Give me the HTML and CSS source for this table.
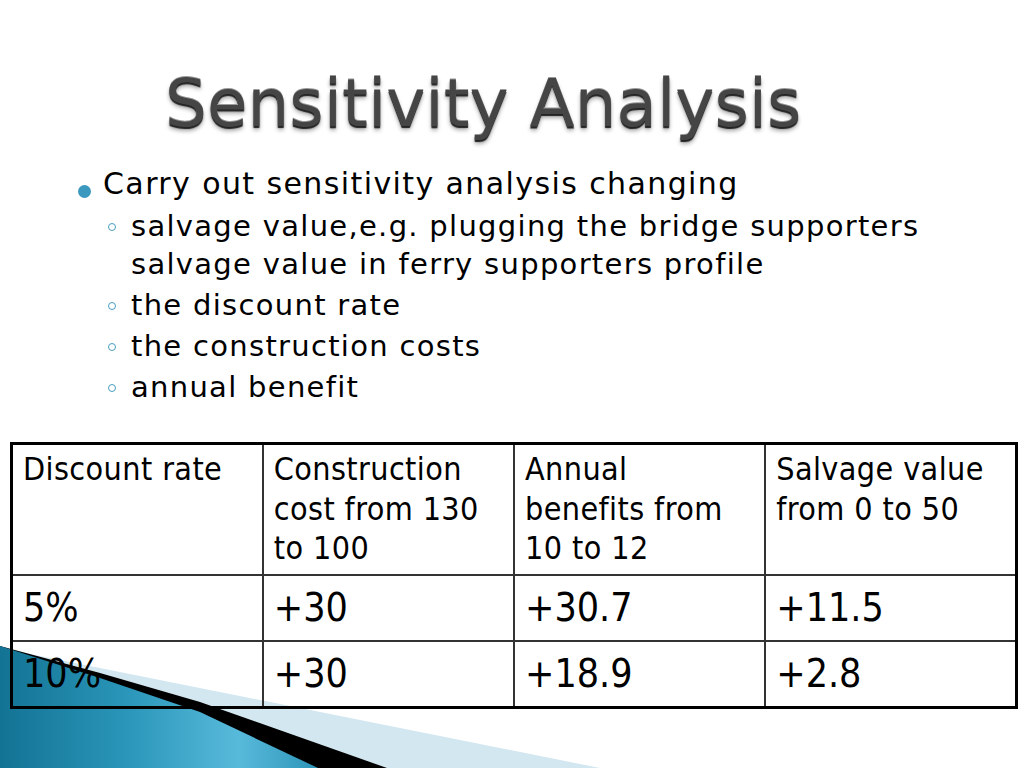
FILE: index.html
```html
<!DOCTYPE html>
<html>
<head>
<meta charset="utf-8">
<link rel="stylesheet" href="styles.css">
</head>
<body>
<div class="slide">
  <svg class="deco" width="620" height="140" viewBox="0 640 620 140" aria-hidden="true">
    <defs>
      <linearGradient id="blueGrad" x1="0" y1="0" x2="1" y2="0">
        <stop offset="0" stop-color="#137394"/>
        <stop offset="0.4" stop-color="#2a96b9"/>
        <stop offset="0.75" stop-color="#58badb"/>
        <stop offset="1" stop-color="#2d95b8"/>
      </linearGradient>
    </defs>
    <polygon points="0,648 600,768 0,768" fill="#d3e7f0"/>
    <polygon points="0,646 100,673 200,702 387,768 0,768" fill="#000"/>
    <polygon points="0,646 100,678 200,712 318,768 0,768" fill="url(#blueGrad)"/>
  </svg>

  <h1 class="title">Sensitivity Analysis</h1>

  <ul class="bullets">
    <li class="lvl1"><span class="dot"></span><span>Carry out sensitivity analysis changing</span></li>
    <li class="lvl2"><span class="ring"></span><span class="txt">salvage value,e.g. plugging the bridge supporters salvage value in ferry supporters profile</span></li>
    <li class="lvl2"><span class="ring"></span><span class="txt">the discount rate</span></li>
    <li class="lvl2"><span class="ring"></span><span class="txt">the construction costs</span></li>
    <li class="lvl2"><span class="ring"></span><span class="txt">annual benefit</span></li>
  </ul>

  <table class="grid">
    <tr class="head">
      <td>Discount rate</td>
      <td>Construction cost from 130 to 100</td>
      <td>Annual benefits from 10 to 12</td>
      <td>Salvage value from 0 to 50</td>
    </tr>
    <tr class="row">
      <td>5%</td>
      <td>+30</td>
      <td>+30.7</td>
      <td>+11.5</td>
    </tr>
    <tr class="row">
      <td>10%</td>
      <td>+30</td>
      <td>+18.9</td>
      <td>+2.8</td>
    </tr>
  </table>
</div>
</body>
</html>
```

FILE: styles.css
```css
html, body {
  margin: 0;
  padding: 0;
  background: #ffffff;
}

.slide {
  position: relative;
  width: 1024px;
  height: 768px;
  overflow: hidden;
  background: #ffffff;
  font-family: "DejaVu Sans", sans-serif;
  color: #000;
}

.deco {
  position: absolute;
  left: 0;
  top: 640px;
  z-index: 0;
}

.title {
  margin: 0;
  padding: 64px 0 0 165px;
  height: 84px;
  font-family: "DejaVu Sans", sans-serif;
  font-weight: normal;
  font-size: 66px;
  line-height: 80px;
  color: #454545;
  text-shadow: 0 -1px 0 #9a9a9a, 0 2px 1px #222, 0 4px 4px rgba(0,0,0,0.35);
}

.bullets {
  list-style: none;
  margin: 0;
  padding: 16px 0 0 0;
  position: relative;
  z-index: 1;
}

.bullets li {
  display: flex;
  align-items: flex-start;
}

.lvl1 {
  padding-left: 78px;
  font-size: 30px;
  letter-spacing: 1.4px;
  line-height: 40px;
}

.lvl2 {
  padding-left: 107px;
  font-size: 29px;
  letter-spacing: 1.3px;
  line-height: 38px;
  margin-top: 3px;
}

.dot {
  flex: none;
  width: 13px;
  height: 13px;
  border-radius: 50%;
  background: #3b98be;
  margin: 21px 12px 0 0;
}

.ring {
  flex: none;
  width: 6px;
  height: 6px;
  border-radius: 50%;
  border: 1.5px solid #4a9fc0;
  margin: 16px 15px 0 1px;
}

.txt {
  width: 820px;
}

.grid {
  position: relative;
  z-index: 1;
  margin: 36px 0 0 10px;
  width: 1008px;
  border-collapse: collapse;
  border: 3px solid #000;
  font-family: "DejaVu Sans Condensed", "DejaVu Sans", sans-serif;
  table-layout: fixed;
}

.grid td {
  border: 2px solid #333;
  vertical-align: top;
  padding: 0 16px 0 10px;
}

.head td {
  height: 124px;
  font-size: 32px;
  letter-spacing: 0.4px;
  line-height: 39.5px;
  padding-top: 5px;
}

.row td {
  height: 64px;
  font-size: 39px;
  line-height: 64px;
}
```
